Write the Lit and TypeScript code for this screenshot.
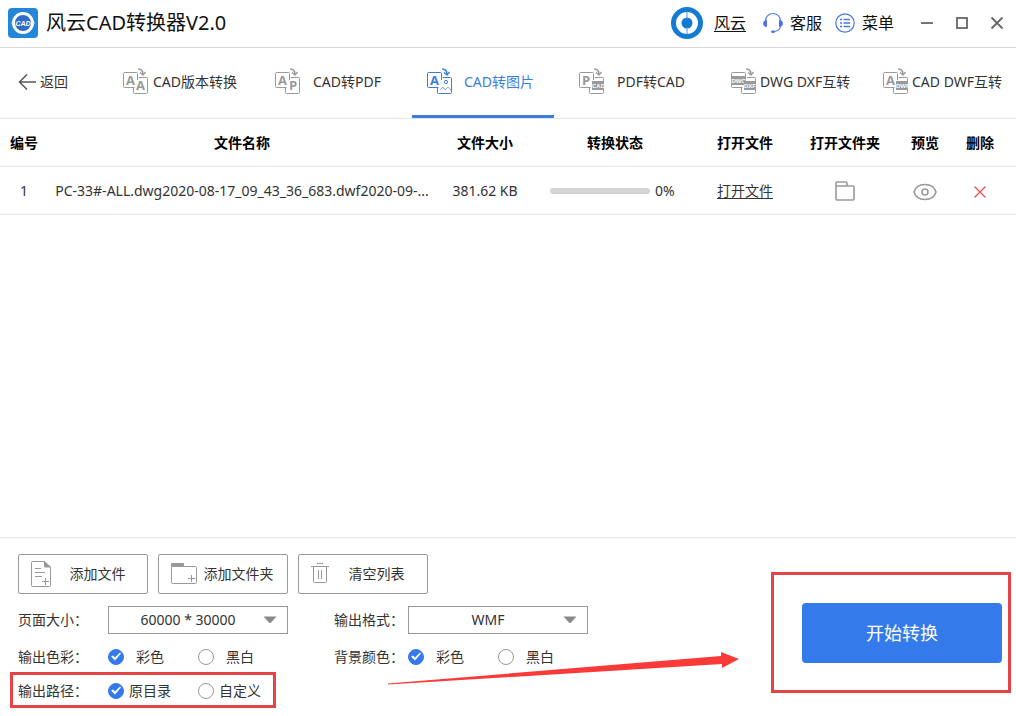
import { LitElement, html, css, svg, nothing } from "lit";
import { customElement, property, state } from "lit/decorators.js";
import { classMap } from "lit/directives/class-map.js";

type Glyph = "aa" | "ap" | "image" | "pcad" | "dwg" | "adwf";

interface Tab {
  id: Glyph;
  label: string;
}

interface Row {
  name: string;
  size: string;
  progress: number;
}

const TABS: Tab[] = [
  { id: "aa", label: "CAD版本转换" },
  { id: "ap", label: "CAD转PDF" },
  { id: "image", label: "CAD转图片" },
  { id: "pcad", label: "PDF转CAD" },
  { id: "dwg", label: "DWG DXF互转" },
  { id: "adwf", label: "CAD DWF互转" },
];

@customElement("tab-icon")
class TabIcon extends LitElement {
  @property() kind: Glyph = "aa";

  static styles = css`
    :host {
      display: block;
      width: 26px;
      height: 27px;
    }
    svg {
      display: block;
    }
    .big {
      font: bold 13px "Open Sans", sans-serif;
      fill: currentColor;
    }
    .tag {
      font: bold 6px "Liberation Sans", sans-serif;
      fill: #fff;
    }
  `;

  private front() {
    if (this.kind === "dwg") {
      return svg`<rect x="0" y="8" width="15" height="9" fill="currentColor"/>
        <text class="tag" x="0.5" y="14.800">DWG</text>`;
    }
    return svg`<text class="big" x="3" y="17">${this.kind === "pcad" ? "P" : "A"}</text>`;
  }

  private back() {
    switch (this.kind) {
      case "aa":
        return svg`<text class="big" x="13" y="22">A</text>`;
      case "ap":
        return svg`<text class="big" x="14" y="22">P</text>`;
      case "image":
        return svg`<circle cx="19" cy="14" r="1.6" fill="none" stroke="currentColor"/>
          <path d="M13 22l3-3 2 3 3-3 3 3" fill="none" stroke="currentColor" opacity=".6"/>`;
      default: {
        const label = this.kind === "pcad" ? "CAD" : this.kind === "dwg" ? "DXF" : "DWF";
        return svg`<rect x="13" y="13" width="12" height="9" fill="currentColor"/>
          <text class="tag" x="13" y="19.700">${label}</text>`;
      }
    }
  }

  render() {
    return html`<svg width="26" height="27" viewBox="0 0 26 27" aria-hidden="true">
      <g fill="none" stroke="currentColor">
        <path d="M14.5 12V5.5a1 1 0 0 0-1-1h-12a1 1 0 0 0-1 1v13a1 1 0 0 0 1 1h10" />
        <path d="M16 9.500h7.500a1 1 0 0 1 1 1v14a1 1 0 0 1-1 1h-12a1 1 0 0 1-1-1v-5" />
        <path d="M15 1c3 0 5 2 5 5.500" stroke-width="1.500" />
        <path d="M17 4.500l3 2.500 2.500-3" stroke-width="1.300" />
      </g>
      ${this.front()}${this.back()}
    </svg>`;
  }
}

@customElement("app-root")
class AppRoot extends LitElement {
  @state() private active: Glyph = "image";
  @state() private rows: Row[] = [
    {
      name: "PC-33#-ALL.dwg2020-08-17_09_43_36_683.dwf2020-09-...",
      size: "381.62 KB",
      progress: 0,
    },
  ];

  static styles = css`
    :host {
      display: flex;
      flex-direction: column;
      min-height: 100vh;
      background: #fff;
      color: #333;
      font: 14px/20px "Noto Sans", "Noto Sans CJK SC", sans-serif;
      --blue: #347aea;
      --line: #e6e6e6;
      --grey: #999;
      --mark: #e64347;
    }
    * {
      box-sizing: border-box;
    }
    svg {
      display: block;
      flex: none;
    }
    button {
      font: inherit;
      color: inherit;
      background: none;
      border: 0;
      padding: 0;
      margin: 0;
      cursor: pointer;
    }
    a {
      color: inherit;
      text-underline-offset: 2px;
    }

    .titlebar {
      display: flex;
      align-items: center;
      height: 48px;
      padding: 0 12px 2px 8px;
      border-bottom: 1px solid #d9d9d9;
      color: #111;
      font-size: 16px;
      line-height: 24px;
    }
    .title {
      flex: 1;
      margin: 0 0 0 8px;
      font-size: 20px;
      font-weight: 400;
      white-space: nowrap;
    }
    .account,
    .action {
      display: flex;
      align-items: center;
      white-space: nowrap;
    }
    .account {
      gap: 11px;
      margin-right: 17px;
    }
    .action {
      gap: 7px;
      margin-right: 13px;
    }
    .window {
      display: flex;
      gap: 21px;
      margin-left: 13px;
      color: #666;
    }

    .toolbar {
      display: flex;
      height: 71px;
      padding-right: 6px;
      border-bottom: 1px solid var(--line);
    }
    .back {
      display: flex;
      align-items: center;
      gap: 4px;
      width: 108px;
      padding: 0 0 2px 18px;
      flex: none;
    }
    .tabs {
      display: flex;
      flex: 1;
      gap: 10px;
    }
    .tab {
      display: flex;
      align-items: center;
      gap: 3px;
      flex: 1 1 0;
      min-width: 0;
      padding: 0 12px 0 15px;
      border-bottom: 3px solid transparent;
    }
    .tab tab-icon {
      flex: none;
      color: #999;
    }
    .tab span {
      flex: 1 1 0;
      min-width: 0;
      text-align: center;
      white-space: nowrap;
    }
    .tab.active,
    .tab.active tab-icon {
      color: #3c7ddb;
    }
    .tab.active {
      border-bottom-color: #3c7ddb;
    }

    .list {
      flex: 1;
    }
    table {
      width: 100%;
      table-layout: fixed;
      border-spacing: 0;
    }
    th,
    td {
      height: 48px;
      padding: 0;
      border-bottom: 1px solid var(--line);
      text-align: center;
      white-space: nowrap;
    }
    th {
      color: #000;
      font-weight: 700;
    }
    .c-index {
      width: 48px;
    }
    .c-size,
    .c-open {
      width: 98px;
    }
    .c-state {
      width: 162px;
    }
    .c-folder {
      width: 102px;
    }
    .c-view {
      width: 58px;
    }
    .c-del {
      width: 62px;
    }
    .last {
      padding-right: 10px;
    }
    .name {
      padding: 0 4px;
      overflow: hidden;
    }
    .state {
      display: flex;
      align-items: center;
      gap: 5px;
      padding-left: 16px;
    }
    progress {
      appearance: none;
      width: 100px;
      height: 6px;
      border: 0;
    }
    progress::-webkit-progress-bar {
      background: #d4d4d4;
      border-radius: 3px;
    }
    progress::-webkit-progress-value {
      background: var(--blue);
      border-radius: 3px;
    }
    td button {
      display: inline-block;
      vertical-align: middle;
      color: var(--grey);
    }
    td .remove {
      color: #f05050;
    }

    .panel {
      position: relative;
      display: flex;
      justify-content: space-between;
      align-items: flex-start;
      padding: 16px 14px 14px 18px;
      border-top: 1px solid var(--line);
    }
    .buttons {
      display: flex;
      gap: 10px;
      margin-bottom: 12px;
    }
    .tool {
      display: flex;
      align-items: center;
      width: 130px;
      height: 40px;
      padding-left: 11px;
      border: 1px solid var(--grey);
      border-radius: 2px;
    }
    .tool span {
      flex: 1;
      text-align: center;
      white-space: nowrap;
      padding: 0 14px 0 10px;
    }
    .tool.wide span {
      padding: 0 10px 0 2px;
    }
    .fields {
      display: grid;
      grid-template-columns: 90px 180px 120px 180px;
      grid-template-rows: 28px;
      grid-auto-rows: 23px;
      row-gap: 11px;
      align-items: center;
    }
    .second {
      padding-left: 46px;
    }
    .select {
      display: grid;
      align-items: center;
    }
    .select > * {
      grid-area: 1 / 1;
    }
    .select svg {
      justify-self: end;
      margin-right: 11px;
      pointer-events: none;
    }
    select {
      appearance: none;
      width: 100%;
      height: 28px;
      padding: 0 20px 0 0;
      border: 1px solid var(--grey);
      border-radius: 0;
      background: #fff;
      color: #333;
      font: inherit;
      text-align: center;
      text-align-last: center;
    }
    .radios {
      display: flex;
      gap: 22px;
    }
    .radios label {
      display: flex;
      align-items: center;
      width: 68px;
    }
    .radios span {
      flex: 1;
      text-align: center;
      white-space: nowrap;
    }
    input[type="radio"] {
      appearance: none;
      flex: none;
      width: 16px;
      height: 16px;
      margin: 0;
      border: 1px solid var(--grey);
      border-radius: 50%;
      background: #fff;
    }
    input[type="radio"]:checked {
      border-color: var(--blue);
      background: var(--blue);
    }
    input[type="radio"]:checked::before {
      content: "";
      display: block;
      width: 14px;
      height: 14px;
      background: #fff;
      clip-path: polygon(2px 7px, 4px 6px, 6px 8px, 11px 3px, 12px 4px, 6px 11px);
    }
    .start-area {
      position: relative;
      margin-top: 49px;
    }
    .start {
      display: block;
      width: 200px;
      height: 60px;
      border-radius: 4px;
      background: var(--blue);
      color: #fff;
      font-size: 18px;
    }
    .frame {
      position: absolute;
      border: 3px solid var(--mark);
      pointer-events: none;
    }
    .start-area .frame {
      inset: -31px -9px -30px -31px;
    }
    .path-frame {
      left: 10px;
      bottom: 8px;
      width: 266px;
      height: 36px;
    }
    .pointer {
      position: absolute;
      left: 388px;
      bottom: 31px;
      pointer-events: none;
    }
  `;

  private toolIcon(kind: "file" | "folder" | "trash") {
    const shapes = {
      file: svg`<path d="M15 1.500H2.500a1 1 0 0 0-1 1v23a1 1 0 0 0 1 1h17a1 1 0 0 0 1-1V7"/>
        <path d="M14.500 1.500v5.500h6z" fill="currentColor"/>
        <path d="M5 8.500h6M5 12.500h10M5 16.500h7M12 21.500h7M15.500 18v7"/>`,
      folder: svg`<path d="M1.500 6V3.500h12v2.500" fill="currentColor"/>
        <path d="M1.500 6.500h24a1 1 0 0 1 1 1v15a1 1 0 0 1-1 1h-23a1 1 0 0 1-1-1z"/>
        <path d="M18 18.500h7M21.500 15v7"/>`,
      trash: svg`<path d="M1 6.500h18M7 3.500h6M3.500 6.500v15a1 1 0 0 0 1 1h11a1 1 0 0 0 1-1v-15M8.500 10v9M11.500 10v9"/>`,
    };
    const width = { file: 22, folder: 28, trash: 20 }[kind];
    return html`<svg width=${width} height="28" viewBox="0 0 ${width} 28" fill="none" stroke="#999" color="#999" aria-hidden="true">${shapes[kind]}</svg>`;
  }

  private radios(name: string, options: string[]) {
    return html`<div class="radios" role="radiogroup" aria-label=${name}>
      ${options.map(
        (option, i) => html`<label
          ><input type="radio" name=${name} .checked=${i === 0} /><span>${option}</span></label
        >`,
      )}
    </div>`;
  }

  private select(id: string, value: string) {
    return html`<div class="select">
      <select id=${id}>
        <option>${value}</option>
      </select>
      <svg width="14" height="8" viewBox="0 0 14 8" aria-hidden="true">
        <path d="M0.500 .5h13L8 6.500a1.400 1.400 0 0 1-2 0z" fill="#888" />
      </svg>
    </div>`;
  }

  private renderTitlebar() {
    return html`<header class="titlebar">
      <svg width="30" height="30" viewBox="0 0 30 30" aria-hidden="true">
        <rect width="30" height="30" rx="4" fill="#2386d8" />
        <circle cx="15" cy="15" r="9.500" fill="#2f6bc8" stroke="#fff" stroke-width="3" />
        <path d="M3 15h3M24 15h3" stroke="#bfe0f7" />
        <text x="15" y="17.500" text-anchor="middle" fill="#fff" font-family="Liberation Sans" font-size="7" font-weight="700" font-style="italic">CAD</text>
      </svg>
      <h1 class="title">风云CAD转换器V2.0</h1>
      <div class="account">
        <svg width="32" height="32" viewBox="0 0 32 32" aria-hidden="true">
          <circle cx="16" cy="16" r="13.500" fill="#fff" stroke="#137bd3" stroke-width="5" />
          <circle cx="16" cy="16" r="5.500" fill="#137bd3" />
          <path d="M16 5v7M16 20v7" stroke="#4a9be0" />
        </svg>
        <a href="#">风云</a>
      </div>
      <button class="action">
        <svg width="20" height="22" viewBox="0 0 20 22" fill="none" aria-hidden="true">
          <path d="M2.500 9a7.500 7.500 0 0 1 15 0M17.500 14c0 3-3 5.500-6.500 5.500" stroke="#4d7fe0" stroke-width="1.200" />
          <path d="M3.500 8.500v6A3 3 0 0 1 3.500 8.500zM16.500 8.500v6A3 3 0 0 0 16.500 8.500z" fill="#4a6ff0" stroke="#4a6ff0" />
          <ellipse cx="10" cy="19.800" rx="2" ry="1.200" fill="#4a6ff0" />
        </svg>
        客服
      </button>
      <button class="action">
        <svg width="20" height="20" viewBox="0 0 20 20" fill="none" stroke="#4878e0" aria-hidden="true">
          <circle cx="10" cy="10" r="9.200" stroke-width="1.200" />
          <path d="M5 6.500h2M8.500 6.500H15M5 10h2M8.500 10H15M5 13.500h2M8.500 13.500H15" stroke-width="1.600" />
        </svg>
        菜单
      </button>
      <div class="window">
        <button aria-label="最小化">
          <svg width="14" height="14" viewBox="0 0 14 14"><path d="M1 7h12" stroke="#666" stroke-width="1.800" /></svg>
        </button>
        <button aria-label="最大化">
          <svg width="14" height="14" viewBox="0 0 14 14" fill="none"><rect x="2" y="2" width="10" height="10" stroke="#666" stroke-width="1.800" /></svg>
        </button>
        <button aria-label="关闭">
          <svg width="14" height="14" viewBox="0 0 14 14"><path d="M1.500 1.500l11 11M12.500 1.500l-11 11" stroke="#666" stroke-width="1.800" /></svg>
        </button>
      </div>
    </header>`;
  }

  private renderRow(row: Row, index: number) {
    return html`<tr>
      <td>${index + 1}</td>
      <td class="name">${row.name}</td>
      <td>${row.size}</td>
      <td>
        <div class="state">
          <progress max="100" .value=${row.progress} aria-label="转换状态"></progress>
          ${row.progress}%
        </div>
      </td>
      <td><a href="#">打开文件</a></td>
      <td>
        <button aria-label="打开文件夹">
          <svg width="20" height="20" viewBox="0 0 20 20" fill="none" stroke="currentColor" stroke-width="1.600">
            <path d="M1 5V2a1 1 0 0 1 1-1h9a1 1 0 0 1 1 1v3M1 5h17a1 1 0 0 1 1 1v12a1 1 0 0 1-1 1H2a1 1 0 0 1-1-1z" />
          </svg>
        </button>
      </td>
      <td>
        <button aria-label="预览">
          <svg width="24" height="18" viewBox="0 0 24 18" fill="none" stroke="currentColor" stroke-width="1.600">
            <path d="M1 9c1.500-5 6-7.500 11-7.500S21.500 4 23 9c-1.500 5-6 7.500-11 7.500S2.500 14 1 9z" />
            <circle cx="12" cy="9" r="3" />
          </svg>
        </button>
      </td>
      <td class="last">
        <button class="remove" aria-label="删除" @click=${() => (this.rows = this.rows.filter((r) => r !== row))}>
          <svg width="14" height="14" viewBox="0 0 14 14" fill="none" stroke="currentColor" stroke-width="1.400">
            <path d="M1.500 1.500l11 11M12.500 1.500l-11 11" />
          </svg>
        </button>
      </td>
    </tr>`;
  }

  render() {
    return html`
      ${this.renderTitlebar()}
      <nav class="toolbar">
        <button class="back">
          <svg width="18" height="18" viewBox="0 0 18 18" fill="none" stroke="#555" stroke-width="1.500" aria-hidden="true">
            <path d="M9 1.500L1.500 9 9 16.500M1.500 9H18" />
          </svg>
          返回
        </button>
        <div class="tabs">
          ${TABS.map(
            (tab) => html`<button
              class=${classMap({ tab: true, active: tab.id === this.active })}
              aria-current=${tab.id === this.active ? "page" : nothing}
              @click=${() => (this.active = tab.id)}
            >
              <tab-icon .kind=${tab.id}></tab-icon><span>${tab.label}</span>
            </button>`,
          )}
        </div>
      </nav>
      <main class="list">
        <table>
          <thead>
            <tr>
              <th class="c-index">编号</th>
              <th>文件名称</th>
              <th class="c-size">文件大小</th>
              <th class="c-state">转换状态</th>
              <th class="c-open">打开文件</th>
              <th class="c-folder">打开文件夹</th>
              <th class="c-view">预览</th>
              <th class="c-del last">删除</th>
            </tr>
          </thead>
          <tbody>
            ${this.rows.map((row, i) => this.renderRow(row, i))}
          </tbody>
        </table>
      </main>
      <footer class="panel">
        <div>
          <div class="buttons">
            <button class="tool">${this.toolIcon("file")}<span>添加文件</span></button>
            <button class="tool wide">${this.toolIcon("folder")}<span>添加文件夹</span></button>
            <button class="tool" @click=${() => (this.rows = [])}>${this.toolIcon("trash")}<span>清空列表</span></button>
          </div>
          <div class="fields">
            <label for="page-size">页面大小：</label>${this.select("page-size", "60000 * 30000")}
            <label class="second" for="format">输出格式：</label>${this.select("format", "WMF")}
            <span>输出色彩：</span>${this.radios("输出色彩", ["彩色", "黑白"])}
            <span class="second">背景颜色：</span>${this.radios("背景颜色", ["彩色", "黑白"])}
            <span>输出路径：</span>${this.radios("输出路径", ["原目录", "自定义"])}
          </div>
        </div>
        <div class="start-area">
          <button class="start">开始转换</button>
          <div class="frame"></div>
        </div>
        <div class="frame path-frame"></div>
        <svg class="pointer" width="352" height="34" viewBox="0 0 352 34" aria-hidden="true">
          <path d="M0 32.500L333 5V1l18 7-17 9v-4L0 33.500z" fill="#fa3a38" />
        </svg>
      </footer>
    `;
  }
}
